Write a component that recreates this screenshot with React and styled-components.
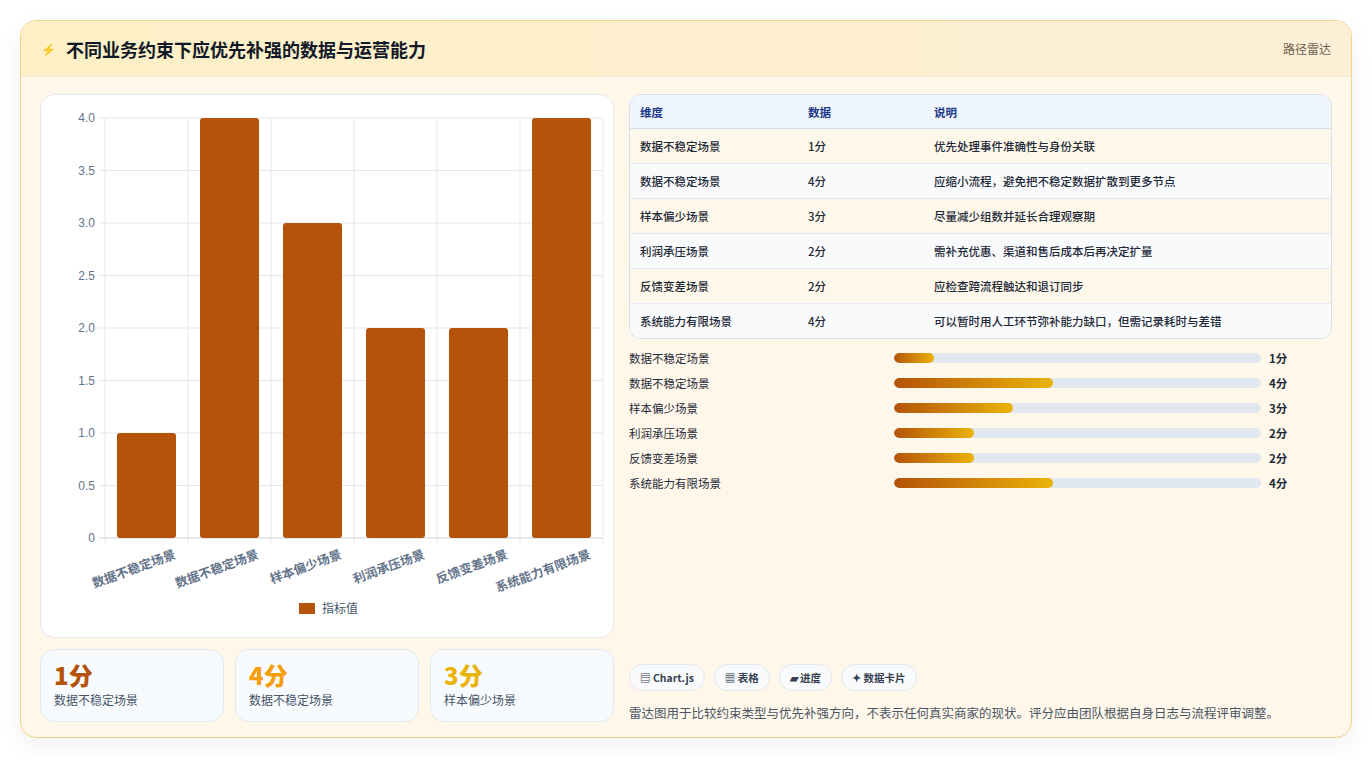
import React from "react";
import styled, { createGlobalStyle } from "styled-components";

const Global = createGlobalStyle`
  body {
    margin: 0;
    background: #ffffff;
    font-family: "Noto Sans CJK SC", "Noto Sans", sans-serif;
  }
`;

const Page = styled.div`
  padding: 20px;
`;

const Panel = styled.div`
  border: 1px solid #f3d58a;
  border-radius: 16px;
  background: #fef7ea;
  overflow: hidden;
  box-shadow: 0 8px 24px rgba(0, 0, 0, 0.06);
  height: 718px;
  box-sizing: border-box;
`;

const Header = styled.div`
  height: 55px;
  display: flex;
  align-items: center;
  justify-content: space-between;
  padding: 0 20px;
  background: linear-gradient(90deg, #fdf0c6, #fdefd6);
  border-bottom: 1px solid #f1e6cf;
`;

const Title = styled.h1`
  margin: 0;
  font-size: 18px;
  font-weight: 700;
  color: #111827;
  display: flex;
  align-items: center;
  gap: 10px;
`;

const Bolt = styled.span`
  color: #3b82f6;
  font-size: 12px;
`;

const Tag = styled.span`
  font-size: 12px;
  color: #6b5f4f;
`;

const Body = styled.div`
  display: grid;
  grid-template-columns: 574px 1fr;
  gap: 15px;
  padding: 17px 19px 0 19px;
`;

const Col = styled.div`
  display: flex;
  flex-direction: column;
  gap: 11px;
`;

const ChartCard = styled.div`
  background: #fff;
  border: 1px solid #e7e7ea;
  border-radius: 14px;
  height: 544px;
  box-sizing: border-box;
`;

const Stats = styled.div`
  display: grid;
  grid-template-columns: repeat(3, 1fr);
  gap: 11px;
`;

const Stat = styled.div`
  background: #f8fbfe;
  border: 1px solid #e3e8f0;
  border-radius: 14px;
  height: 73px;
  box-sizing: border-box;
  padding: 10px 13px;
`;

const StatValue = styled.div`
  font-size: 24px;
  font-weight: 800;
  line-height: 30px;
  color: ${(p) => p.color};
`;

const StatLabel = styled.div`
  font-size: 12px;
  color: #475569;
  margin-top: 1px;
`;

const TableWrap = styled.div`
  border: 1px solid #d9dee7;
  border-radius: 12px;
  overflow: hidden;
`;

const Table = styled.table`
  width: 100%;
  border-collapse: collapse;
  font-size: 11.5px;
`;

const Th = styled.th`
  text-align: left;
  font-weight: 700;
  color: #1e3a8a;
  background: #eef5fd;
  height: 33px;
  padding: 0 10px;
  border-bottom: 1px solid #d7dee9;
`;

const Tr = styled.tr`
  background: ${(p) => (p.$odd ? "#f8fafc" : "#fdf8ea")};
`;

const Td = styled.td`
  height: 34px;
  padding: 0 10px;
  color: #1f2937;
  font-weight: 500;
  border-top: 1px solid #e6e9ef;
`;

const Bars = styled.div`
  display: flex;
  flex-direction: column;
  gap: 7px;
  margin-top: 1px;
`;

const BarRow = styled.div`
  display: grid;
  grid-template-columns: 265px 367px 1fr;
  align-items: center;
  gap: 0;
  height: 18px;
  font-size: 11.5px;
  color: #1f2937;
`;

const Track = styled.div`
  height: 10px;
  border-radius: 5px;
  background: #e2e8f0;
  overflow: hidden;
`;

const Fill = styled.div`
  height: 100%;
  border-radius: 5px;
  background: linear-gradient(90deg, #b45309, #eab308);
`;

const BarVal = styled.span`
  font-weight: 700;
  padding-left: 8px;
`;

const RightCol = styled.div`
  display: flex;
  flex-direction: column;
`;

const Chips = styled.div`
  display: flex;
  gap: 9px;
  margin-top: 0;
  padding-top: 0;
`;

const Chip = styled.span`
  font-size: 10.5px;
  font-weight: 700;
  color: #374151;
  background: #f8fafc;
  border: 1px solid #e2e8f0;
  border-radius: 14px;
  padding: 5px 10px;
`;

const Note = styled.p`
  margin: 12px 0 0;
  font-size: 12.5px;
  color: #4b5563;
`;

const rows = [
  ["数据不稳定场景", 1, "优先处理事件准确性与身份关联"],
  ["数据不稳定场景", 4, "应缩小流程，避免把不稳定数据扩散到更多节点"],
  ["样本偏少场景", 3, "尽量减少组数并延长合理观察期"],
  ["利润承压场景", 2, "需补充优惠、渠道和售后成本后再决定扩量"],
  ["反馈变差场景", 2, "应检查跨流程触达和退订同步"],
  ["系统能力有限场景", 4, "可以暂时用人工环节节弥补能力缺口，但需记录耗时与差错"],
];
rows[5][2] = "可以暂时用人工环节节补能力缺口，但需记录耗时与差错".replace("节节补", "节弥补");

function BarChart() {
  const x0 = 64, y0 = 23, w = 498, h = 420;
  const step = w / 6;
  const ticks = ["0", "0.5", "1.0", "1.5", "2.0", "2.5", "3.0", "3.5", "4.0"];
  return (
    <svg width="574" height="544" style={{ display: "block" }}>
      {ticks.map((t, i) => {
        const y = y0 + h - (i * h) / 8;
        return (
          <g key={t}>
            <line x1={x0 - 6} x2={x0 + w} y1={y} y2={y} stroke={i === 0 ? "#cbd5e1" : "#e5e7eb"} />
            <text x={x0 - 10} y={y + 4} fontSize="12" fill="#64748b" textAnchor="end" fontFamily="Liberation Sans, sans-serif">{t}</text>
          </g>
        );
      })}
      {Array.from({ length: 7 }).map((_, i) => (
        <line key={i} x1={x0 + i * step} x2={x0 + i * step} y1={y0} y2={y0 + h + 6} stroke="#e5e7eb" />
      ))}
      {rows.map(([name, v], i) => {
        const bh = (v / 4) * h;
        const bx = x0 + i * step + 12;
        return (
          <g key={i}>
            <rect x={bx} y={y0 + h - bh} width={59} height={bh} rx="3" fill="#b45309" />
            <text
              transform={`translate(${x0 + i * step + step / 2 + 30}, ${y0 + h + 20}) rotate(-20)`}
              fontSize="12.5" fontWeight="700" fill="#64748b" textAnchor="end"
            >{name}</text>
          </g>
        );
      })}
      <rect x="258" y="508" width="16" height="11" fill="#b45309" />
      <text x="281" y="518" fontSize="12" fill="#475569">指标值</text>
    </svg>
  );
}

const statColors = ["#b45309", "#f59e0b", "#eab308"];

export default function App() {
  return (
    <Page>
      <Global />
      <Panel>
        <Header>
          <Title><Bolt>⚡</Bolt>不同业务约束下应优先补强的数据与运营能力</Title>
          <Tag>路径雷达</Tag>
        </Header>
        <Body>
          <Col>
            <ChartCard><BarChart /></ChartCard>
            <Stats>
              {rows.slice(0, 3).map(([n, v], i) => (
                <Stat key={i}>
                  <StatValue color={statColors[i]}>{v}分</StatValue>
                  <StatLabel>{n}</StatLabel>
                </Stat>
              ))}
            </Stats>
          </Col>
          <RightCol>
            <TableWrap>
              <Table>
                <thead>
                  <tr>
                    <Th style={{ width: 148 }}>维度</Th>
                    <Th style={{ width: 106 }}>数据</Th>
                    <Th>说明</Th>
                  </tr>
                </thead>
                <tbody>
                  {rows.map(([n, v, d], i) => (
                    <Tr key={i} $odd={i % 2 === 1}>
                      <Td>{n}</Td>
                      <Td>{v}分</Td>
                      <Td>{d}</Td>
                    </Tr>
                  ))}
                </tbody>
              </Table>
            </TableWrap>
            <Bars style={{ marginTop: 10 }}>
              {rows.map(([n, v], i) => (
                <BarRow key={i}>
                  <span>{n}</span>
                  <Track><Fill style={{ width: `${v * 10.85}%` }} /></Track>
                  <BarVal>{v}分</BarVal>
                </BarRow>
              ))}
            </Bars>
            <div style={{ flex: 1 }} />
            <Chips style={{ marginTop: 172 }}>
              <Chip>▤ Chart.js</Chip>
              <Chip>▦ 表格</Chip>
              <Chip>▰ 进度</Chip>
              <Chip>✦ 数据卡片</Chip>
            </Chips>
            <Note>雷达图用于比较约束类型与优先补强方向，不表示任何真实商家的现状。评分应由团队根据自身日志与流程评审调整。</Note>
          </RightCol>
        </Body>
      </Panel>
    </Page>
  );
}
